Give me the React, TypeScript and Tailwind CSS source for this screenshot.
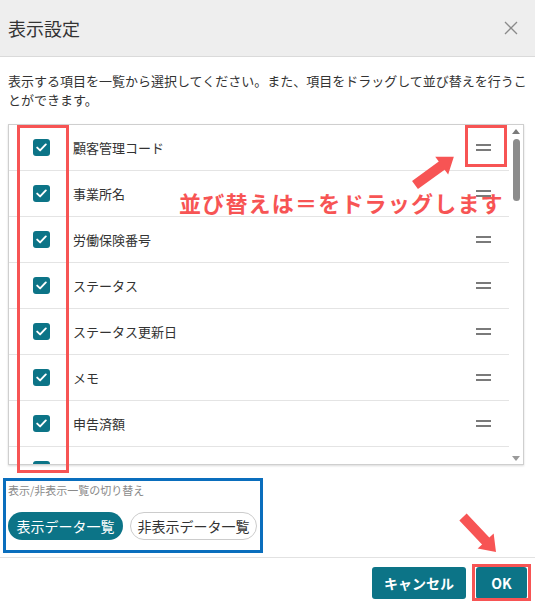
import React from 'react';

const columns = [
  '顧客管理コード',
  '事業所名',
  '労働保険番号',
  'ステータス',
  'ステータス更新日',
  'メモ',
  '申告済額',
  '入金確定',
];

const CheckIcon = () => (
  <svg width="11" height="9" viewBox="0 0 11 9" fill="none">
    <path d="M1.2 4.6 L4.1 7.4 L9.8 1.4" stroke="#fff" strokeWidth="1.9" strokeLinecap="round" strokeLinejoin="round" />
  </svg>
);

const DragHandle = () => (
  <div className="flex w-[15px] flex-col gap-[3px]">
    <div className="h-[2px] bg-[#7a7a7a]" />
    <div className="h-[2px] bg-[#7a7a7a]" />
  </div>
);

const Row = ({ label }: { label: string }) => (
  <div className="flex h-[46px] shrink-0 items-center border-b border-[#e4e4e4] pl-[24px] pr-[18px]">
    <div className="flex h-[17px] w-[17px] items-center justify-center rounded-[3px] bg-[#0c7487]">
      <CheckIcon />
    </div>
    <span className="ml-[23px] flex-1 text-[13px] text-[#333]">{label}</span>
    <DragHandle />
  </div>
);

// block arrow pointing right from the origin, rotated into place by the caller
const ArrowShape = () => (
  <path d="M0 -5 L33 -5 L33 -11 L48 0 L33 11 L33 5 L0 5 Z" fill="#f75454" />
);

export default function App() {
  return (
    <div className="relative flex h-[604px] w-[535px] flex-col overflow-hidden bg-white font-['Noto_Sans_CJK_JP','Noto_Sans',sans-serif] text-[#333]">
      {/* Header */}
      <div className="flex h-[57px] shrink-0 items-center justify-between border-b border-[#dadada] bg-[#eeeeee] pl-[8px] pr-[17px]">
        <h1 className="text-[18px] leading-none text-[#333]">表示設定</h1>
        <svg width="14" height="14" viewBox="0 0 14 14">
          <path d="M1 1 L13 13 M13 1 L1 13" stroke="#8a8a8a" strokeWidth="1.3" />
        </svg>
      </div>

      {/* Body */}
      <div className="flex flex-1 flex-col px-[8px] pt-[14px]">
        <p className="text-[13px] leading-[19px] text-[#333]">
          表示する項目を一覧から選択してください。また、項目をドラッグして並び替えを行うことができます。
        </p>

        {/* Column list */}
        <div className="mt-[15px] flex h-[341px] w-[516px] border border-[#cfcfcf] shadow-[0_1px_2px_rgba(0,0,0,0.15)]">
          <div className="flex flex-1 flex-col overflow-hidden">
            {columns.map((c) => (
              <Row key={c} label={c} />
            ))}
          </div>
          <div className="flex w-[14px] flex-col items-center bg-white pt-[4px] pb-[3px]">
            <div className="h-0 w-0 border-x-[4px] border-b-[5px] border-x-transparent border-b-[#7a7a7a]" />
            <div className="mt-[5px] h-[62px] w-[7px] rounded-full bg-[#8c8c8c]" />
            <div className="flex-1" />
            <div className="h-0 w-0 border-x-[4px] border-t-[5px] border-x-transparent border-t-[#9a9a9a]" />
          </div>
        </div>

        {/* Toggle between visible / hidden lists */}
        <div className="mt-[17px] flex flex-col">
          <span className="text-[11px] leading-[16px] text-[#8a8a8a]">表示/非表示一覧の切り替え</span>
          <div className="mt-[14px] flex gap-[7px]">
            <button className="h-[28px] w-[115px] rounded-full bg-[#0c7487] text-[14px] text-white">表示データ一覧</button>
            <button className="h-[28px] w-[127px] rounded-full border border-[#cccccc] bg-white text-[14px] text-[#333]">非表示データ一覧</button>
          </div>
        </div>
      </div>

      {/* Footer */}
      <div className="flex h-[47px] shrink-0 items-start justify-end gap-[10px] border-t border-[#e2e2e2] pt-[9px] pr-[8px]">
        <button className="h-[32px] w-[94px] rounded-[3px] bg-[#0c7487] text-[14px] font-bold text-white">キャンセル</button>
        <button className="h-[32px] w-[51px] rounded-[3px] bg-[#0c7487] text-[14px] font-bold text-white">OK</button>
      </div>

      {/* Annotations */}
      <div className="absolute left-[17px] top-[125px] h-[348px] w-[52px] border-[3px] border-[#f75454]" />
      <div className="absolute left-[465px] top-[125px] h-[42px] w-[42px] border-[3px] border-[#f75454]" />
      <div className="absolute left-[3px] top-[478px] h-[75px] w-[260px] border-[3px] border-[#0a6ebd]" />
      <div className="absolute left-[472px] top-[564px] h-[37px] w-[59px] border-[3px] border-[#f75454]" />

      <span className="absolute left-[179px] top-[188px] text-[22px] font-bold leading-[28px] tracking-[1.2px] text-[#f75454]">
        並び替えは＝をドラッグします
      </span>

      <svg className="absolute left-[405px] top-[145px]" width="60" height="50" viewBox="0 0 60 50">
        <g transform="translate(10 40) rotate(-36)">
          <ArrowShape />
        </g>
      </svg>
      <svg className="absolute left-[450px] top-[505px]" width="60" height="60" viewBox="0 0 60 60">
        <g transform="translate(13 12) rotate(46.6)">
          <ArrowShape />
        </g>
      </svg>
    </div>
  );
}
